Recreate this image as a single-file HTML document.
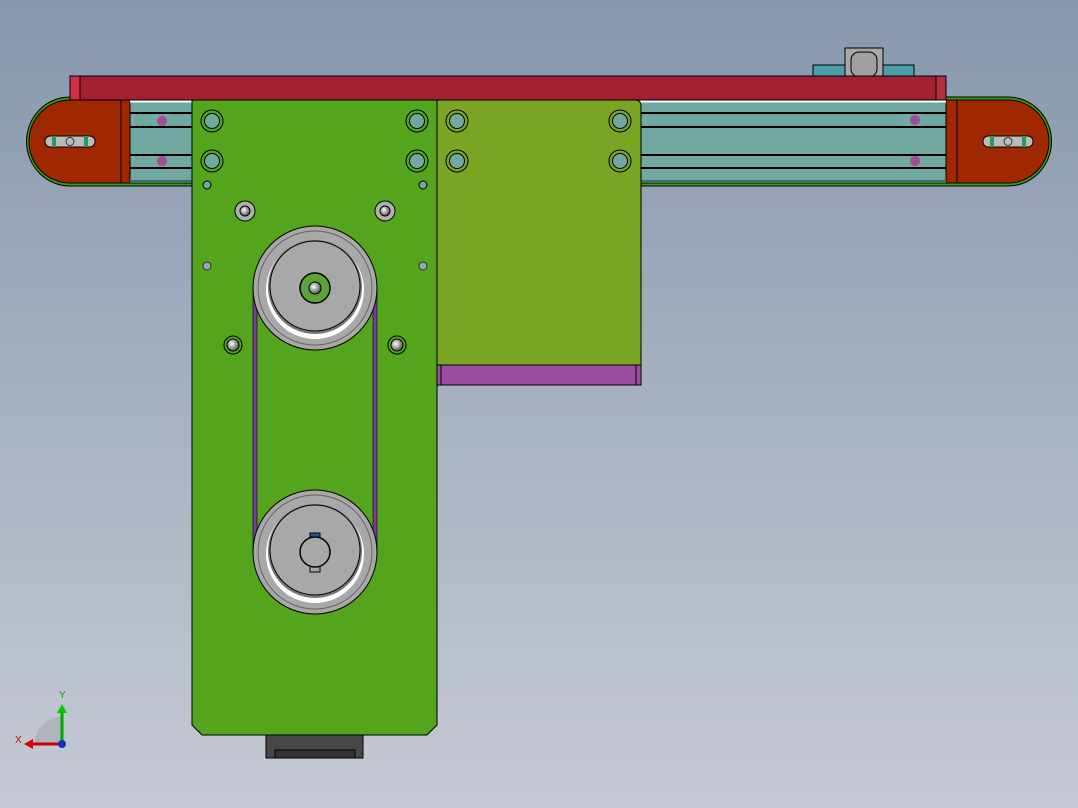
<!DOCTYPE html>
<html><head><style>html,body{margin:0;padding:0;width:1078px;height:808px;overflow:hidden}</style></head>
<body>
<svg width="1078" height="808" viewBox="0 0 1078 808" xmlns="http://www.w3.org/2000/svg">
<defs>
<linearGradient id="bg" x1="0" y1="0" x2="0" y2="1">
<stop offset="0" stop-color="#8797ad"/><stop offset="1" stop-color="#c6cad4"/></linearGradient>
<radialGradient id="scr" cx="0.4" cy="0.4" r="0.6"><stop offset="0" stop-color="#fff"/><stop offset="1" stop-color="#555"/></radialGradient>
</defs>
<rect width="1078" height="808" fill="url(#bg)"/>
<!-- top block -->
<rect x="813" y="65" width="101" height="12" fill="#4aa0a6" stroke="#000"/>
<rect x="845" y="48" width="38" height="29" fill="#a8a8a8" stroke="#000"/>
<rect x="851" y="52" width="26" height="25" rx="8" fill="#a0a0a0" stroke="#000"/>
<!-- belt outer green -->
<path d="M70,97 H1008 A43,44 0 0 1 1008,186 H70 A43,44 0 0 1 70,97 Z" fill="#3a9a10" stroke="#000"/>
<!-- caps -->
<path d="M70,100 H130 V183 H70 A41,41.5 0 0 1 70,100 Z" fill="#a02800" stroke="#000"/>
<line x1="121" y1="100" x2="121" y2="183" stroke="#000"/>
<path d="M946,100 H1008 A41,41.5 0 0 1 1008,183 H946 Z" fill="#a02800" stroke="#000"/>
<line x1="957" y1="100" x2="957" y2="183" stroke="#000"/>
<!-- rail -->
<rect x="130" y="100" width="816" height="83" fill="#72a8a2" stroke="#000"/>
<line x1="130" y1="101.5" x2="946" y2="101.5" stroke="#fff" stroke-width="2"/>
<g stroke="#000" stroke-width="2"><line x1="130" y1="113" x2="946" y2="113"/><line x1="130" y1="127" x2="946" y2="127"/><line x1="130" y1="155" x2="946" y2="155"/><line x1="130" y1="168" x2="946" y2="168"/></g>
<rect x="130" y="180" width="816" height="3" fill="#3e6e68"/>
<g fill="#a24c9a"><circle cx="162" cy="121" r="5"/><circle cx="162" cy="161" r="5"/><circle cx="915" cy="120" r="5"/><circle cx="915" cy="161" r="5"/></g>
<!-- slots -->
<g><rect x="45" y="136" width="50" height="11" rx="5" fill="#bbb" stroke="#000"/><rect x="52" y="136" width="4" height="11" fill="#2a9a5a"/><rect x="84" y="136" width="4" height="11" fill="#2a9a5a"/><circle cx="70" cy="141.5" r="4" fill="none" stroke="#333"/></g>
<g><rect x="983" y="136" width="50" height="11" rx="5" fill="#bbb" stroke="#000"/><rect x="990" y="136" width="4" height="11" fill="#2a9a5a"/><rect x="1022" y="136" width="4" height="11" fill="#2a9a5a"/><circle cx="1008" cy="141.5" r="4" fill="none" stroke="#333"/></g>
<!-- red bar -->
<rect x="70" y="76" width="876" height="24" fill="#a32030" stroke="#000"/>
<rect x="70" y="76" width="10" height="24" fill="#d43044" stroke="#000"/>
<rect x="936" y="76" width="10" height="24" fill="#b03040" stroke="#000"/>
<!-- olive plate -->
<path d="M437,100 H635 Q641,100 641,106 V365 H437 Z" fill="#7aa424" stroke="#000"/>
<rect x="437" y="365" width="204" height="20" fill="#9c4fa0" stroke="#000"/>
<line x1="441" y1="365" x2="441" y2="385" stroke="#000"/><line x1="636" y1="365" x2="636" y2="385" stroke="#000"/>
<!-- motor -->
<rect x="266" y="733" width="97" height="25" fill="#474747" stroke="#000"/>
<rect x="275" y="750" width="80" height="8" fill="#333" stroke="#000"/>
<!-- green plate -->
<path d="M192,100 H437 V725 L427,735 H202 L192,725 Z" fill="#55a41e" stroke="#000"/>
<!-- holes -->
<g fill="#72a8a2" stroke="#000">
<g><circle cx="212" cy="121" r="11" fill="none"/><circle cx="212" cy="121" r="7.5"/></g>
<g><circle cx="417" cy="121" r="11" fill="none"/><circle cx="417" cy="121" r="7.5"/></g>
<g><circle cx="212" cy="161" r="11" fill="none"/><circle cx="212" cy="161" r="7.5"/></g>
<g><circle cx="417" cy="161" r="11" fill="none"/><circle cx="417" cy="161" r="7.5"/></g>
<g><circle cx="457" cy="121" r="11" fill="none"/><circle cx="457" cy="121" r="7.5"/></g>
<g><circle cx="620" cy="121" r="11" fill="none"/><circle cx="620" cy="121" r="7.5"/></g>
<g><circle cx="457" cy="161" r="11" fill="none"/><circle cx="457" cy="161" r="7.5"/></g>
<g><circle cx="620" cy="161" r="11" fill="none"/><circle cx="620" cy="161" r="7.5"/></g>
<circle cx="207" cy="185" r="4"/><circle cx="423" cy="185" r="4"/>
</g>
<g fill="#9aa6b8" stroke="#333"><circle cx="207" cy="266" r="4"/><circle cx="423" cy="266" r="4"/></g>
<g stroke="#000"><circle cx="245" cy="211" r="10" fill="#b0b0b0"/><circle cx="245" cy="211" r="5" fill="url(#scr)"/>
<circle cx="385" cy="211" r="10" fill="#b0b0b0"/><circle cx="385" cy="211" r="5" fill="url(#scr)"/>
<circle cx="233" cy="345" r="9" fill="none"/><circle cx="233" cy="345" r="6" fill="url(#scr)"/>
<circle cx="397" cy="345" r="9" fill="none"/><circle cx="397" cy="345" r="6" fill="url(#scr)"/></g>
<!-- belt -->
<rect x="253" y="288" width="4" height="264" fill="#7a3aa0" stroke="#000" stroke-width="0.6"/>
<rect x="373" y="288" width="4" height="264" fill="#7a3aa0" stroke="#000" stroke-width="0.6"/>
<!-- pulleys -->
<g stroke="#000">
<circle cx="315" cy="288" r="62" fill="#a8a8a8"/>
<circle cx="315" cy="288" r="57" fill="none" stroke="#666" stroke-width="1"/>
<circle cx="315" cy="290" r="49" fill="#fff" stroke="none"/>
<circle cx="315" cy="287" r="47" fill="#777" stroke="none"/>
<circle cx="315" cy="286" r="45" fill="#a8a8a8"/>
<circle cx="315" cy="288" r="15" fill="#5aa438" stroke-width="1.5"/>
<circle cx="315" cy="288" r="6" fill="url(#scr)"/>
<circle cx="315" cy="552" r="62" fill="#a8a8a8"/>
<circle cx="315" cy="552" r="57" fill="none" stroke="#666" stroke-width="1"/>
<circle cx="315" cy="554" r="49" fill="#fff" stroke="none"/>
<circle cx="315" cy="551" r="47" fill="#777" stroke="none"/>
<circle cx="315" cy="550" r="45" fill="#a8a8a8"/>
<rect x="310" y="565" width="10" height="7" fill="#a8a8a8"/>
<circle cx="315" cy="552" r="15" fill="#a8a8a8" stroke-width="1.5"/>
<rect x="310" y="533" width="10" height="4" fill="#1a5aa0"/>
</g>
<!-- axis triad -->
<path d="M34,745 A30,30 0 0 1 62,716 V745 Z" fill="#b0b4bc"/>
<line x1="62" y1="745" x2="62" y2="712" stroke="#0a0" stroke-width="3"/>
<path d="M57,713 L62,704 L67,713 Z" fill="#0c0"/>
<line x1="62" y1="744" x2="32" y2="744" stroke="#c00" stroke-width="3"/>
<path d="M33,739 L24,744 L33,749 Z" fill="#d00"/>
<circle cx="62" cy="744" r="4" fill="#1030c0"/>
<text x="59" y="698" font-family="Liberation Sans, sans-serif" font-size="10" fill="#0a0">Y</text>
<text x="15" y="743" font-family="Liberation Sans, sans-serif" font-size="10" fill="#c00">X</text>
</svg>
</body></html>
